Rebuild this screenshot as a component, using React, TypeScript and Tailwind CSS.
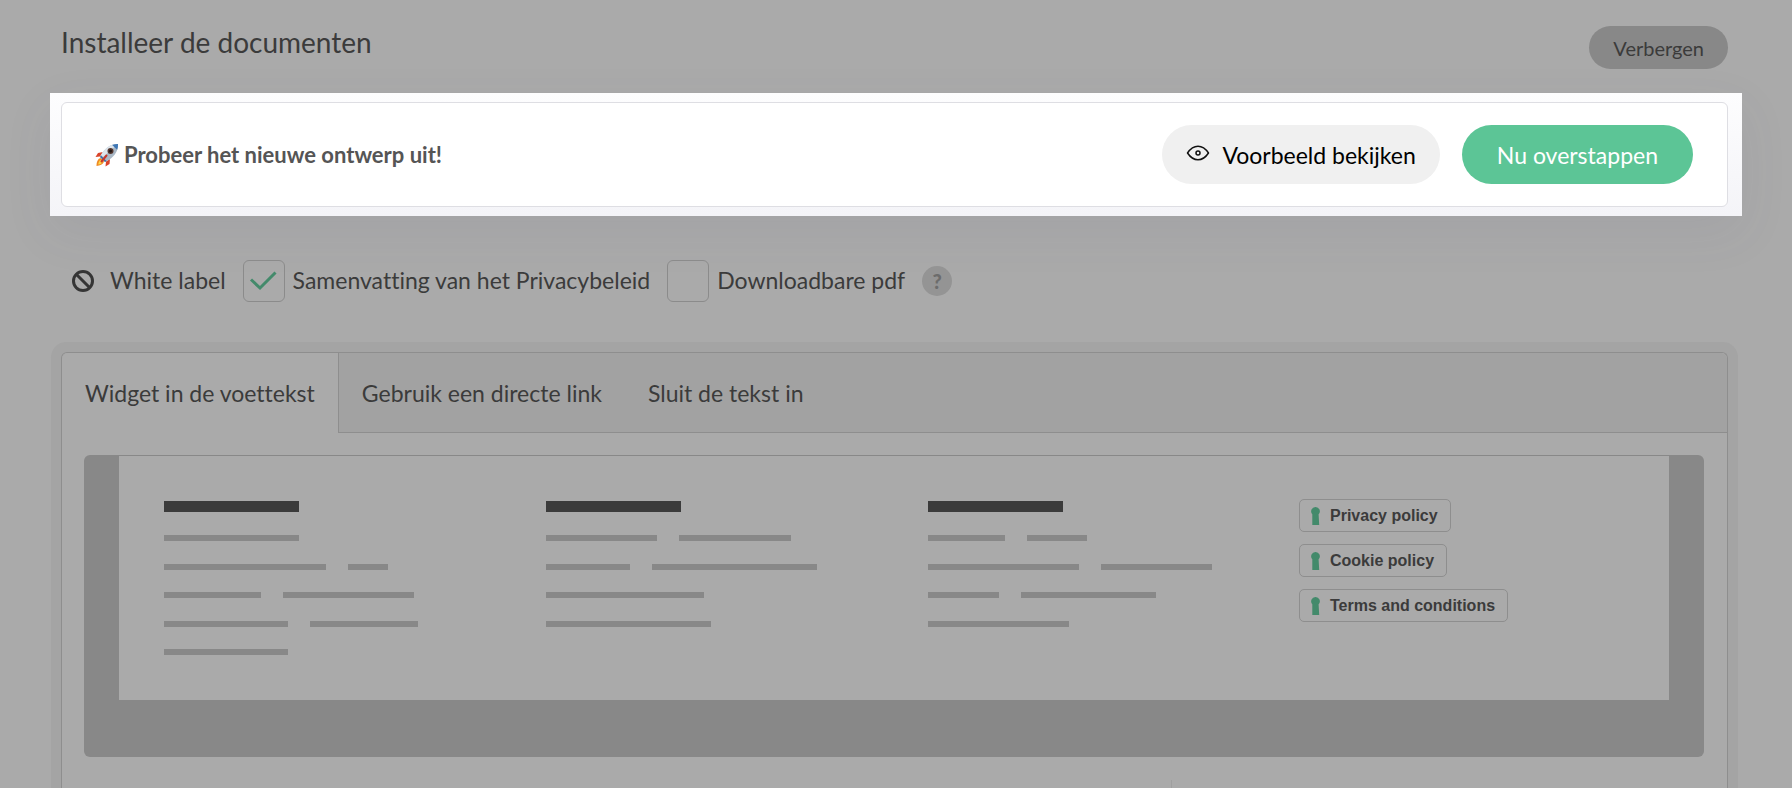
import React, { useState } from "react";

const columns = [
  [[135], [162, 40], [97, 131], [124, 108], [124]],
  [[111, 112], [84, 165], [158], [165]],
  [[77, 60], [151, 111], [71, 135], [141]],
];

const policies = ["Privacy policy", "Cookie policy", "Terms and conditions"];

const tabs = ["Widget in de voettekst", "Gebruik een directe link", "Sluit de tekst in"];

const Rocket = () => (
  <svg className="h-6 w-6 shrink-0" viewBox="0 0 24 24" aria-hidden="true">
    <path d="M8 9 3 10 .5 14 5 13.5Z" fill="#d9442b" />
    <path d="m15 16-.5 5-4 2.500.5-5Z" fill="#d9442b" />
    <path d="M5.500 15C2.500 16 1.500 19 1.500 23c3.500-.5 6.500-1.500 7.500-4.500Z" fill="#f08a24" />
    <path d="M5.500 17c-1.500 1-2 2.500-2.200 4.500 2-.3 3.500-1 4.200-2.500Z" fill="#fbd84b" />
    <path d="M23 1c-6-.3-11.500 3-15.500 8.500L5 14l5 5 4.500-2.500C20 12.500 23.500 7 23 1Z" fill="#a9b8c6" />
    <path d="M23 1C17 .7 11.500 4 7.500 9.500L6 12l2 2L19.500 4Z" fill="#dde5ec" />
    <path d="M23 1c-2-.1-4 .2-5.800.9l4.900 4.900C22.800 5 23.100 3 23 1Z" fill="#3e76b5" />
    <path d="m5 14 5 5 1.500-1L6 12.500Z" fill="#3e6fa8" />
    <circle cx="15.5" cy="8" r="3" fill="#54372f" />
    <circle cx="15.5" cy="8" r="1.6" fill="#211917" />
    <path d="m11.500 12.500-5 6" stroke="#c8372a" strokeWidth="2" strokeLinecap="round" />
  </svg>
);

const Eye = () => (
  <svg className="mb-1 h-4 w-6 shrink-0" viewBox="0 0 24 16" fill="none" stroke="#111" aria-hidden="true">
    <path d="M1.500 8C4.500 3.500 8 1.200 12 1.200S19.500 3.500 22.500 8C19.500 12.500 16 14.800 12 14.800S4.500 12.500 1.500 8Z" strokeWidth="1.5" strokeLinejoin="round" />
    <circle cx="12" cy="8" r="2" strokeWidth="1.5" />
  </svg>
);

const Keyhole = () => (
  <svg className="h-[18px] w-[9px] shrink-0" viewBox="0 0 9 18" fill="#438a6b" aria-hidden="true">
    <path d="M4.500 0A4.300 4.300 0 0 0 1.300 7.200V18H8.200L7.600 7.300A4.300 4.300 0 0 0 4.500 0Z" />
  </svg>
);

type CheckProps = {
  label: string;
  defaultChecked?: boolean;
};

const Check = ({ label, defaultChecked }: CheckProps) => (
  <label className="flex items-center gap-2">
    <span className="grid">
      <input
        type="checkbox"
        defaultChecked={defaultChecked}
        className="peer col-start-1 row-start-1 h-[42px] w-[42px] appearance-none rounded-md border border-[#8b8b8b]"
      />
      <svg
        className="pointer-events-none invisible col-start-1 row-start-1 h-[42px] w-[42px] peer-checked:visible"
        viewBox="0 0 42 42"
        fill="none"
        stroke="#438a6b"
        strokeWidth="3"
        aria-hidden="true"
      >
        <path d="m8 19.500 9 8.500L32.500 12.500" />
      </svg>
    </span>
    <span className="pb-[3px]">{label}</span>
  </label>
);

const App = () => {
  const [active, setActive] = useState(0);

  return (
    <div className="flex min-h-screen flex-col bg-[#aaaaaa] font-['Lato',sans-serif] text-[23px] leading-7 text-[#3b3b3b] [font-variant-ligatures:none]">
      <header className="flex h-[93px] items-start justify-between pr-16 pl-[61px]">
        <h1 className="pt-6 text-[28px] leading-9">Installeer de documenten</h1>
        <button className="mt-[26px] h-[43px] rounded-full bg-[#888888] px-6 text-[20px]">Verbergen</button>
      </header>

      <section className="mx-[50px] bg-linear-to-b from-[#fdfdfe] to-[#f4f4f8] pt-[9px] pr-[14px] pb-[9px] pl-[11px] shadow-[0_16px_50px_rgba(80,80,110,0.08)]">
        <div className="flex h-[105px] items-center justify-between rounded-md border border-[#dedee3] bg-white pr-[34px] pl-[33px]">
          <h2 className="flex items-center gap-[5px] text-[22px] font-bold text-[#555555]">
            <Rocket />
            Probeer het nieuwe ontwerp uit!
          </h2>
          <div className="flex gap-[22px]">
            <button className="flex h-[59px] items-center gap-3 rounded-full bg-[#f0f0f0] px-6 text-black">
              <Eye />
              Voorbeeld bekijken
            </button>
            <button className="h-[59px] rounded-full bg-[#5cc596] px-[35px] text-white">Nu overstappen</button>
          </div>
        </div>
      </section>

      <div className="flex items-center gap-[17px] pt-11 pl-[71px]">
        <div className="flex items-center gap-[15px]">
          <svg className="h-6 w-6" viewBox="0 0 24 24" fill="none" stroke="#353535" strokeWidth="3" aria-hidden="true">
            <circle cx="12" cy="12" r="9.5" />
            <path d="m5.500 5.500 13 13" />
          </svg>
          <span className="pb-[3px]">White label</span>
        </div>
        <Check label="Samenvatting van het Privacybeleid" defaultChecked />
        <Check label="Downloadbare pdf" />
        <button className="h-[30px] w-[30px] rounded-full bg-[#949494] text-[20px] font-black text-[#6c6c6c]">?</button>
      </div>

      <section className="mt-[50px] mr-16 ml-[61px] flex-1 rounded-t-md border border-b-0 border-[#8e8e8e] shadow-[0_0_0_10px_#a4a4a4]">
        <div role="tablist" className="flex h-20 rounded-t-md bg-[#a2a2a2]">
          {tabs.map((tab, i) => (
            <button
              key={tab}
              role="tab"
              aria-selected={i === active}
              onClick={() => setActive(i)}
              className="border-b border-[#8e8e8e] px-[23px] aria-selected:rounded-tl-md aria-selected:border-r aria-selected:border-b-0 aria-selected:bg-[#aaaaaa]"
            >
              {tab}
            </button>
          ))}
          <div className="flex-1 border-b border-[#8e8e8e]" />
        </div>

        <div className="pt-[22px] pr-[23px] pl-[22px]">
          <div className="rounded-md bg-[#888888] px-[35px] pt-px pb-[57px]">
            <div className="grid h-[244px] grid-cols-[382fr_382fr_371fr_325fr] bg-[#aaaaaa] px-[45px]">
              {columns.map((rows, i) => (
                <div key={i} className="pt-[45px]">
                  <div className="h-[11px] w-[135px] bg-[#3b3b3b]" />
                  <div className="mt-[23px] grid h-[120px] grid-rows-[repeat(5,6px)] content-between">
                    {rows.map((row, j) => (
                      <div key={j} className="flex gap-[22px]">
                        {row.map((width, k) => (
                          <div key={k} className="bg-[#888888]" style={{ width }} />
                        ))}
                      </div>
                    ))}
                  </div>
                </div>
              ))}
              <div className="flex flex-col items-start gap-3 pt-[43px] font-['Liberation_Sans',sans-serif] text-[16px] font-bold">
                {policies.map((policy) => (
                  <a key={policy} href="#" className="flex h-[33px] items-center gap-[10px] rounded-[5px] border border-[#8e8e8e] pr-3 pl-[11px]">
                    <Keyhole />
                    {policy}
                  </a>
                ))}
              </div>
            </div>
          </div>
          <div className="mt-[23px] ml-[1087px] h-2 w-px bg-[#9f9f9f]" />
        </div>
      </section>
    </div>
  );
};

export default App;
